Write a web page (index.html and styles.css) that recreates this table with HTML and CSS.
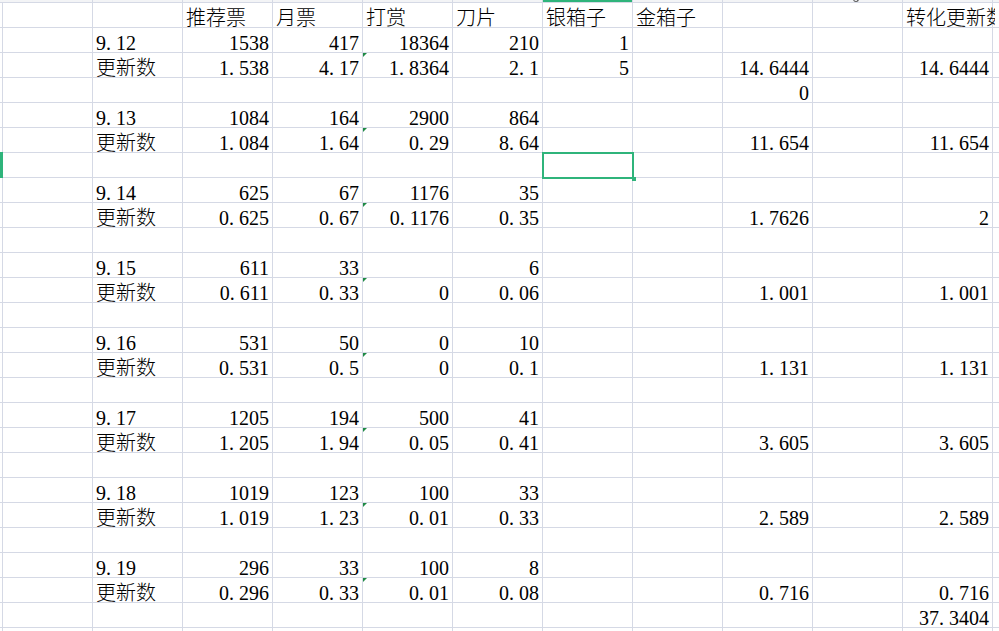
FILE: index.html
```html
<!DOCTYPE html>
<html lang="zh-CN">
<head>
<meta charset="utf-8">
<title>Sheet</title>
<link rel="stylesheet" href="styles.css">
</head>
<body>
<div class="sheet">
  <div class="row top">
    <div class="S"></div>
    <div class="A h"></div><div class="B h"></div><div class="C h"></div><div class="D h"></div>
    <div class="E h"></div><div class="F h"></div><div class="G h on"></div><div class="H h"></div>
    <div class="I h"></div><div class="J h hook"></div><div class="K h"></div><div class="L h"></div>
  </div>

  <div class="row">
    <div class="C t">推荐票</div><div class="D t">月票</div><div class="E t">打赏</div><div class="F t">刀片</div>
    <div class="G t">银箱子</div><div class="H t">金箱子</div><div class="K t clip">转化更新数</div>
  </div>
  <div class="row">
    <div class="B l">9<span class="p">.</span>12</div><div class="C n">1538</div><div class="D n">417</div>
    <div class="E n">18364</div><div class="F n">210</div><div class="G n">1</div>
  </div>
  <div class="row">
    <div class="B t">更新数</div><div class="C n">1<span class="p">.</span>538</div><div class="D n">4<span class="p">.</span>17</div>
    <div class="E n warn">1<span class="p">.</span>8364</div><div class="F n">2<span class="p">.</span>1</div><div class="G n">5</div>
    <div class="I n">14<span class="p">.</span>6444</div><div class="K n">14<span class="p">.</span>6444</div>
  </div>
  <div class="row">
    <div class="I n">0</div>
  </div>

  <div class="row">
    <div class="B l">9<span class="p">.</span>13</div><div class="C n">1084</div><div class="D n">164</div>
    <div class="E n">2900</div><div class="F n">864</div>
  </div>
  <div class="row">
    <div class="B t">更新数</div><div class="C n">1<span class="p">.</span>084</div><div class="D n">1<span class="p">.</span>64</div>
    <div class="E n warn">0<span class="p">.</span>29</div><div class="F n">8<span class="p">.</span>64</div>
    <div class="I n">11<span class="p">.</span>654</div><div class="K n">11<span class="p">.</span>654</div>
  </div>
  <div class="row">
    <div class="S rsel"></div><div class="G sel"></div>
  </div>

  <div class="row">
    <div class="B l">9<span class="p">.</span>14</div><div class="C n">625</div><div class="D n">67</div>
    <div class="E n">1176</div><div class="F n">35</div>
  </div>
  <div class="row">
    <div class="B t">更新数</div><div class="C n">0<span class="p">.</span>625</div><div class="D n">0<span class="p">.</span>67</div>
    <div class="E n warn">0<span class="p">.</span>1176</div><div class="F n">0<span class="p">.</span>35</div>
    <div class="I n">1<span class="p">.</span>7626</div><div class="K n">2</div>
  </div>
  <div class="row"></div>

  <div class="row">
    <div class="B l">9<span class="p">.</span>15</div><div class="C n">611</div><div class="D n">33</div>
    <div class="F n">6</div>
  </div>
  <div class="row">
    <div class="B t">更新数</div><div class="C n">0<span class="p">.</span>611</div><div class="D n">0<span class="p">.</span>33</div>
    <div class="E n warn">0</div><div class="F n">0<span class="p">.</span>06</div>
    <div class="I n">1<span class="p">.</span>001</div><div class="K n">1<span class="p">.</span>001</div>
  </div>
  <div class="row"></div>

  <div class="row">
    <div class="B l">9<span class="p">.</span>16</div><div class="C n">531</div><div class="D n">50</div>
    <div class="E n">0</div><div class="F n">10</div>
  </div>
  <div class="row">
    <div class="B t">更新数</div><div class="C n">0<span class="p">.</span>531</div><div class="D n">0<span class="p">.</span>5</div>
    <div class="E n warn">0</div><div class="F n">0<span class="p">.</span>1</div>
    <div class="I n">1<span class="p">.</span>131</div><div class="K n">1<span class="p">.</span>131</div>
  </div>
  <div class="row"></div>

  <div class="row">
    <div class="B l">9<span class="p">.</span>17</div><div class="C n">1205</div><div class="D n">194</div>
    <div class="E n">500</div><div class="F n">41</div>
  </div>
  <div class="row">
    <div class="B t">更新数</div><div class="C n">1<span class="p">.</span>205</div><div class="D n">1<span class="p">.</span>94</div>
    <div class="E n warn">0<span class="p">.</span>05</div><div class="F n">0<span class="p">.</span>41</div>
    <div class="I n">3<span class="p">.</span>605</div><div class="K n">3<span class="p">.</span>605</div>
  </div>
  <div class="row"></div>

  <div class="row">
    <div class="B l">9<span class="p">.</span>18</div><div class="C n">1019</div><div class="D n">123</div>
    <div class="E n">100</div><div class="F n">33</div>
  </div>
  <div class="row">
    <div class="B t">更新数</div><div class="C n">1<span class="p">.</span>019</div><div class="D n">1<span class="p">.</span>23</div>
    <div class="E n warn">0<span class="p">.</span>01</div><div class="F n">0<span class="p">.</span>33</div>
    <div class="I n">2<span class="p">.</span>589</div><div class="K n">2<span class="p">.</span>589</div>
  </div>
  <div class="row"></div>

  <div class="row">
    <div class="B l">9<span class="p">.</span>19</div><div class="C n">296</div><div class="D n">33</div>
    <div class="E n">100</div><div class="F n">8</div>
  </div>
  <div class="row">
    <div class="B t">更新数</div><div class="C n">0<span class="p">.</span>296</div><div class="D n">0<span class="p">.</span>33</div>
    <div class="E n warn">0<span class="p">.</span>01</div><div class="F n">0<span class="p">.</span>08</div>
    <div class="I n">0<span class="p">.</span>716</div><div class="K n">0<span class="p">.</span>716</div>
  </div>
  <div class="row">
    <div class="K n">37<span class="p">.</span>3404</div>
  </div>
  <div class="row"></div>
</div>
</body>
</html>
```
FILE: styles.css
```css
html, body {
  margin: 0;
  padding: 0;
  overflow: hidden;
  background: #fff;
}

.sheet {
  width: 999px;
  height: 631px;
  overflow: hidden;
  background-color: #fff;
  background-image:
    linear-gradient(to right, #d5d9e5 1px, transparent 1px),
    linear-gradient(to bottom, #d5d9e5 1px, transparent 1px);
  background-size: 90px 100%, 100% 25px;
  background-position: 2px 0, 0 2px;
  color: #000;
  font-size: 20px;
}

.row {
  display: grid;
  grid-template-columns: 3px repeat(11, 90px) 1fr;
  grid-template-rows: 25px;
  height: 25px;
}

.row > div {
  min-width: 0;
  white-space: nowrap;
  position: relative;
}

.row.top {
  height: 3px;
  grid-template-rows: 2px;
}

.S { grid-column: 1; }
.A { grid-column: 2; }
.B { grid-column: 3; }
.C { grid-column: 4; }
.D { grid-column: 5; }
.E { grid-column: 6; }
.F { grid-column: 7; }
.G { grid-column: 8; }
.H { grid-column: 9; }
.I { grid-column: 10; }
.J { grid-column: 11; }
.K { grid-column: 12; }
.L { grid-column: 13; }

/* column header strip (only its bottom edge is visible) */
.top > div {
  height: 2px;
  overflow: hidden;
  background: #f3f4f6;
}
.top .h {
  width: 89px;
}
.top .on {
  background: #2fb47b;
}
.top .hook::after {
  content: "";
  position: absolute;
  left: 40px;
  top: -2px;
  width: 4px;
  height: 3px;
  border: 1px solid #555;
  border-top: none;
  border-radius: 0 0 3px 3px;
}

/* numbers */
.n, .l {
  font-family: "Liberation Serif", "Noto Sans CJK SC", serif;
  line-height: 31px;
}
.n {
  text-align: right;
  padding-right: 4px;
}
.l {
  padding-left: 3px;
}
.p {
  letter-spacing: 5px;
}

/* CJK text */
.t {
  font-family: "Noto Sans CJK SC", sans-serif;
  font-weight: 300;
  line-height: 27px;
  padding-left: 3px;
}
.clip {
  width: 89px;
  overflow: hidden;
}

/* error indicator triangle */
.warn::before {
  content: "";
  position: absolute;
  left: 0;
  top: 0;
  width: 0;
  height: 0;
  border-top: 4px solid #1f8a45;
  border-right: 4px solid transparent;
}

/* selected row header edge */
.rsel {
  background: #2fb47b;
  height: 26px;
  margin-top: -1px;
}

/* selected cell */
.sel::after {
  content: "";
  position: absolute;
  left: -1px;
  top: -1px;
  width: 92px;
  height: 27px;
  border: 2px solid #2fb47b;
  box-sizing: border-box;
}
.sel::before {
  content: "";
  position: absolute;
  left: 89px;
  top: 24px;
  width: 4px;
  height: 4px;
  background: #2fb47b;
  z-index: 1;
}
```
